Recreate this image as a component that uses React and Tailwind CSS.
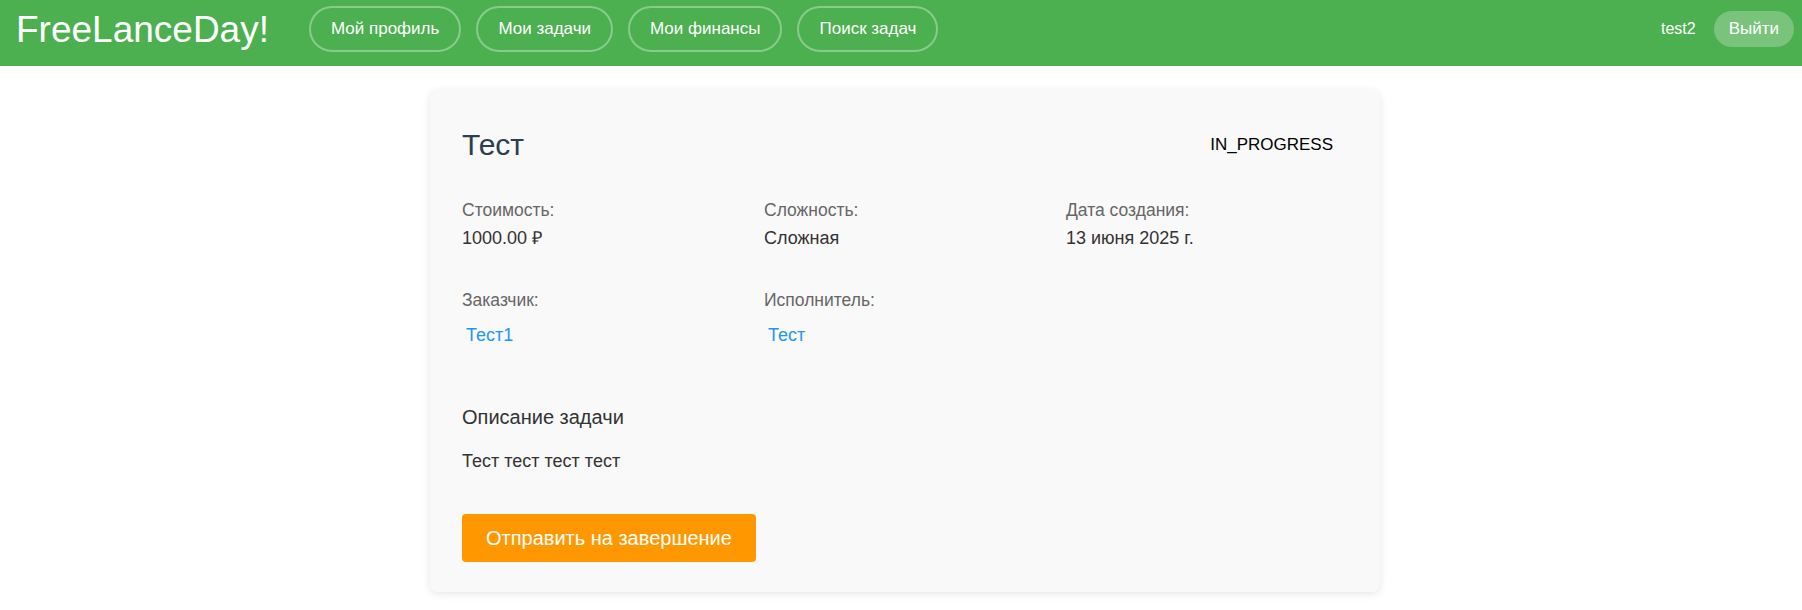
import React from 'react';

const navItems = ['Мой профиль', 'Мои задачи', 'Мои финансы', 'Поиск задач'];

const Header = () => (
  <header className="h-[66px] bg-[#4CAF50] flex items-center justify-between pl-4 pr-2 pb-2 text-white">
    <div className="flex items-center">
      <span className="text-[37px] leading-none mr-[40px]">FreeLanceDay!</span>
      <nav className="flex gap-[15px]">
        {navItems.map(item => (
          <button
            key={item}
            className="border-2 border-white/35 rounded-full px-[20px] py-[11px] text-[17px] leading-[20px] text-white"
          >
            {item}
          </button>
        ))}
      </nav>
    </div>
    <div className="flex items-center gap-[18px]">
      <span className="text-[16px]">test2</span>
      <button className="bg-white/25 rounded-full px-[15px] py-[8px] text-[17px] leading-[20px] text-white">
        Выйти
      </button>
    </div>
  </header>
);

const Field = ({ label, children }) => (
  <div className="flex flex-col">
    <span className="text-[17.5px] text-[#666]">{label}</span>
    {children}
  </div>
);

const TaskCard = () => (
  <div className="w-[950px] bg-[#f9f9f9] rounded-lg shadow-[0_2px_8px_rgba(0,0,0,0.1)] px-8 pt-[38px] pb-[30px]">
    <div className="flex items-center justify-between">
      <h1 className="text-[30px] text-[#2c3e50]">Тест</h1>
      <span className="px-[15px] text-[17px] text-black">IN_PROGRESS</span>
    </div>

    <div className="grid grid-cols-3 gap-x-5 gap-y-[42px] mt-[37px]">
      <Field label="Стоимость:">
        <span className="mt-2 text-[18px] text-[#333]">1000.00 ₽</span>
      </Field>
      <Field label="Сложность:">
        <span className="mt-2 text-[18px] text-[#333]">Сложная</span>
      </Field>
      <Field label="Дата создания:">
        <span className="mt-2 text-[18px] text-[#333]">13 июня 2025 г.</span>
      </Field>
      <Field label="Заказчик:">
        <button className="mt-[11px] self-start p-1 text-[18px] text-[#2196F3]">Тест1</button>
      </Field>
      <Field label="Исполнитель:">
        <button className="mt-[11px] self-start p-1 text-[18px] text-[#2196F3]">Тест</button>
      </Field>
    </div>

    <div className="mt-[56px]">
      <h2 className="text-[20px] text-[#333]">Описание задачи</h2>
      <p className="mt-[22px] text-[18px] text-[#333]">Тест тест тест тест</p>
    </div>

    <button className="mt-[42px] bg-[#FF9800] rounded text-white text-[20px] leading-[24px] px-6 py-3">
      Отправить на завершение
    </button>
  </div>
);

export default function App() {
  return (
    <div className="min-h-[610px] bg-white leading-[1.15] font-['Liberation_Sans',Arial,sans-serif]">
      <Header />
      <div className="flex justify-center pl-2 pt-6">
        <TaskCard />
      </div>
    </div>
  );
}
